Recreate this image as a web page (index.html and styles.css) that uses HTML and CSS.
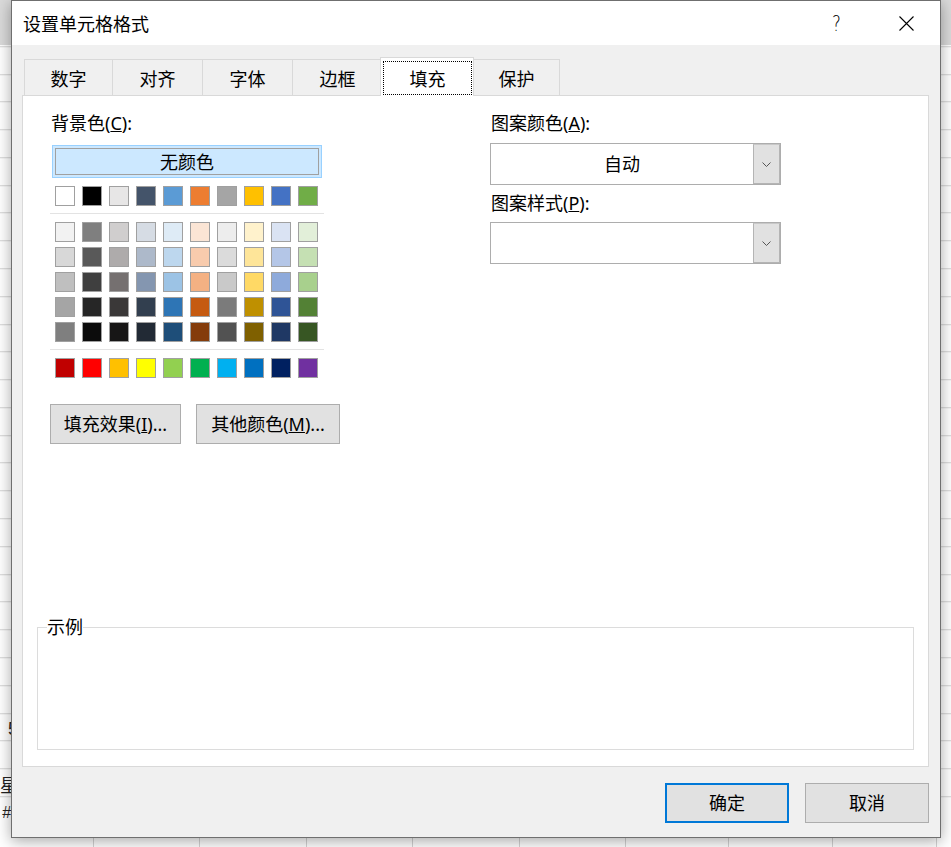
FILE: index.html
```html
<!DOCTYPE html>
<html lang="zh-CN">
<head>
<meta charset="utf-8">
<title>设置单元格格式</title>
<link rel="stylesheet" href="styles.css">
</head>
<body>
<div class="sheet">
  <div class="band"></div>
  <div class="rows">
    <div class="col c1">
      <div class="frag f5">5</div>
      <div class="frag fx">星</div>
      <div class="frag fh">#</div>
    </div>
    <div class="col c2"></div>
    <div class="col c3"></div>
    <div class="col c4"></div>
    <div class="col c5"></div>
    <div class="col c6"></div>
    <div class="col c7"></div>
    <div class="col c8"></div>
    <div class="col c9"></div>
  </div>
</div>

<div class="dialog">
  <div class="titlebar">
    <span class="title">设置单元格格式</span>
    <span class="help">?</span>
    <span class="close"><svg width="15" height="15" viewBox="0 0 15 15"><path d="M0.5 0.5 L14.5 14.5 M14.5 0.5 L0.5 14.5" stroke="#000" stroke-width="1.1" fill="none"/></svg></span>
  </div>
  <div class="body">
    <div class="tabs">
      <div class="tab first">数字</div>
      <div class="tab">对齐</div>
      <div class="tab">字体</div>
      <div class="tab">边框</div>
      <div class="tab active"><span class="focus">填充</span></div>
      <div class="tab last">保护</div>
    </div>
    <div class="panel">
      <div class="top">
        <div class="leftcol">
          <div class="label">背景色(<u>C</u>):</div>
          <div class="nocolor"><span>无颜色</span></div>
          <div class="grid row1">
            <span class="sw" style="background:#ffffff"></span>
            <span class="sw" style="background:#000000"></span>
            <span class="sw" style="background:#e7e6e6"></span>
            <span class="sw" style="background:#44546a"></span>
            <span class="sw" style="background:#5b9bd5"></span>
            <span class="sw" style="background:#ed7d31"></span>
            <span class="sw" style="background:#a5a5a5"></span>
            <span class="sw" style="background:#ffc000"></span>
            <span class="sw" style="background:#4472c4"></span>
            <span class="sw" style="background:#70ad47"></span>
          </div>
          <div class="sep"></div>
          <div class="grid tints">
            <span class="sw" style="background:#f2f2f2"></span>
            <span class="sw" style="background:#7f7f7f"></span>
            <span class="sw" style="background:#d0cece"></span>
            <span class="sw" style="background:#d6dce4"></span>
            <span class="sw" style="background:#deebf6"></span>
            <span class="sw" style="background:#fbe5d5"></span>
            <span class="sw" style="background:#ededed"></span>
            <span class="sw" style="background:#fff2cc"></span>
            <span class="sw" style="background:#dae3f3"></span>
            <span class="sw" style="background:#e2efd9"></span>

            <span class="sw" style="background:#d8d8d8"></span>
            <span class="sw" style="background:#595959"></span>
            <span class="sw" style="background:#aeabab"></span>
            <span class="sw" style="background:#adb9ca"></span>
            <span class="sw" style="background:#bdd7ee"></span>
            <span class="sw" style="background:#f8cbad"></span>
            <span class="sw" style="background:#dbdbdb"></span>
            <span class="sw" style="background:#fee599"></span>
            <span class="sw" style="background:#b4c6e7"></span>
            <span class="sw" style="background:#c5e0b3"></span>

            <span class="sw" style="background:#bfbfbf"></span>
            <span class="sw" style="background:#3f3f3f"></span>
            <span class="sw" style="background:#757070"></span>
            <span class="sw" style="background:#8496b0"></span>
            <span class="sw" style="background:#9cc3e5"></span>
            <span class="sw" style="background:#f4b183"></span>
            <span class="sw" style="background:#c9c9c9"></span>
            <span class="sw" style="background:#ffd965"></span>
            <span class="sw" style="background:#8eaadb"></span>
            <span class="sw" style="background:#a8d08d"></span>

            <span class="sw" style="background:#a5a5a5"></span>
            <span class="sw" style="background:#262626"></span>
            <span class="sw" style="background:#3a3838"></span>
            <span class="sw" style="background:#323f4f"></span>
            <span class="sw" style="background:#2e75b5"></span>
            <span class="sw" style="background:#c55a11"></span>
            <span class="sw" style="background:#7b7b7b"></span>
            <span class="sw" style="background:#bf9000"></span>
            <span class="sw" style="background:#2f5496"></span>
            <span class="sw" style="background:#538135"></span>

            <span class="sw" style="background:#7f7f7f"></span>
            <span class="sw" style="background:#0c0c0c"></span>
            <span class="sw" style="background:#171616"></span>
            <span class="sw" style="background:#222a35"></span>
            <span class="sw" style="background:#1e4e79"></span>
            <span class="sw" style="background:#843c0b"></span>
            <span class="sw" style="background:#525252"></span>
            <span class="sw" style="background:#7f6000"></span>
            <span class="sw" style="background:#1f3864"></span>
            <span class="sw" style="background:#375623"></span>
          </div>
          <div class="sep"></div>
          <div class="grid std">
            <span class="sw" style="background:#c00000"></span>
            <span class="sw" style="background:#ff0000"></span>
            <span class="sw" style="background:#ffc000"></span>
            <span class="sw" style="background:#ffff00"></span>
            <span class="sw" style="background:#92d050"></span>
            <span class="sw" style="background:#00b050"></span>
            <span class="sw" style="background:#00b0f0"></span>
            <span class="sw" style="background:#0070c0"></span>
            <span class="sw" style="background:#002060"></span>
            <span class="sw" style="background:#7030a0"></span>
          </div>
          <div class="btnrow">
            <button class="btn fx-btn">填充效果(<u>I</u>)...</button>
            <button class="btn more-btn">其他颜色(<u>M</u>)...</button>
          </div>
        </div>
        <div class="rightcol">
          <div class="label">图案颜色(<u>A</u>):</div>
          <div class="select first-select">
            <span class="val">自动</span>
            <span class="drop"><svg width="9" height="5" viewBox="0 0 9 5"><path d="M0.5 0.5 L4.5 4.5 L8.5 0.5" stroke="#555" stroke-width="1" fill="none"/></svg></span>
          </div>
          <div class="label label2">图案样式(<u>P</u>):</div>
          <div class="select second-select">
            <span class="val"></span>
            <span class="drop"><svg width="9" height="5" viewBox="0 0 9 5"><path d="M0.5 0.5 L4.5 4.5 L8.5 0.5" stroke="#555" stroke-width="1" fill="none"/></svg></span>
          </div>
        </div>
      </div>
      <fieldset class="sample">
        <legend>示例</legend>
        <div class="sample-area"></div>
      </fieldset>
    </div>
    <div class="footer">
      <button class="btn action primary">确定</button>
      <button class="btn action">取消</button>
    </div>
  </div>
</div>
</body>
</html>
```

FILE: styles.css
```css
html, body {
  margin: 0;
  padding: 0;
}

body {
  width: 951px;
  height: 847px;
  overflow: hidden;
  position: relative;
  background: #ffffff;
  font-family: "Noto Sans", "Noto Sans CJK SC", sans-serif;
  color: #000;
}

/* ---------- spreadsheet behind the dialog ---------- */
.sheet {
  height: 847px;
  display: flex;
  flex-direction: column;
}

.band {
  height: 45px;
  background: #dadada;
  flex: none;
}

.rows {
  flex: 1;
  display: flex;
  background-image: repeating-linear-gradient(to bottom, transparent 0, transparent 26.78px, #d4d4d4 26.78px, #d4d4d4 27.78px);
  background-position: 0 -25.78px;
}

.col {
  box-sizing: border-box;
  border-right: 1px solid #d4d4d4;
  flex: none;
}
.c1 { width: 94px; }
.c2 { width: 106px; }
.c3 { width: 107px; }
.c4 { width: 106px; }
.c5 { width: 107px; }
.c6 { width: 106px; }
.c7 { width: 103px; }
.c8 { width: 104px; }
.c9 { width: 104px; }

.frag {
  color: #222;
}
.f5 {
  font-family: "Liberation Sans", sans-serif;
  font-size: 18px;
  line-height: 20px;
  margin-top: 674px;
  padding-left: 8px;
}
.fx {
  font-family: "Noto Sans CJK SC", sans-serif;
  font-size: 18px;
  line-height: 20px;
  margin-top: 35px;
  padding-left: 0;
}
.fh {
  font-family: "Liberation Sans", sans-serif;
  font-style: italic;
  font-size: 16px;
  line-height: 18px;
  margin-top: 10px;
  padding-left: 2px;
}

/* ---------- dialog window ---------- */
.dialog {
  position: absolute;
  left: 11px;
  top: 0;
  width: 930px;
  height: 838px;
  box-sizing: border-box;
  border: 1px solid #6f6f6f;
  background: #f0f0f0;
  box-shadow: 0 3px 14px rgba(0, 0, 0, 0.35);
  display: flex;
  flex-direction: column;
}

.titlebar {
  height: 44px;
  flex: none;
  background: #ffffff;
  display: flex;
  align-items: center;
  padding-left: 11px;
  padding-top: 1px;
  box-sizing: border-box;
}

.title {
  font-size: 18px;
  line-height: 24px;
}

.help {
  margin-left: auto;
  font-family: "DejaVu Sans", sans-serif;
  font-size: 21px;
  line-height: 24px;
  font-weight: 300;
  transform: scaleX(0.8);
}

.close {
  display: flex;
  margin-left: 57px;
  margin-right: 26px;
  margin-top: -1px;
}

.body {
  flex: 1;
  display: flex;
  flex-direction: column;
  padding: 12px 11px 14px 10px;
}

/* ---------- tabs ---------- */
.tabs {
  display: flex;
  align-items: flex-end;
  height: 38px;
  padding-left: 2px;
  flex: none;
}

.tab {
  box-sizing: border-box;
  width: 90px;
  height: 36px;
  flex: none;
  border: 1px solid #d9d9d9;
  border-bottom: none;
  border-right: none;
  background: #f0f0f0;
  display: flex;
  align-items: center;
  justify-content: center;
  font-size: 18px;
  line-height: 24px;
  padding-top: 2px;
}

.tab.first { width: 88px; }

.tab.last {
  width: 87px;
  border-right: 1px solid #d9d9d9;
}

.tab.active {
  width: 94px;
  height: 39px;
  margin-left: -2px;
  margin-right: -1px;
  margin-bottom: -1px;
  border-right: 1px solid #d9d9d9;
  background: #ffffff;
  position: relative;
  z-index: 2;
  padding: 3px 1px 1px 2px;
  align-items: stretch;
  justify-content: stretch;
}

.focus {
  flex: 1;
  border: 1px dotted #000;
  display: flex;
  align-items: center;
  justify-content: center;
  padding-top: 2px;
}

/* ---------- panel ---------- */
.panel {
  height: 672px;
  box-sizing: border-box;
  border: 1px solid #d9d9d9;
  background: #ffffff;
  display: flex;
  flex-direction: column;
  flex: none;
}

.top {
  display: flex;
  padding: 15px 0 0 27px;
}

.leftcol {
  width: 274px;
  flex: none;
  display: flex;
  flex-direction: column;
}

.rightcol {
  width: 291px;
  flex: none;
  margin-left: 166px;
  display: flex;
  flex-direction: column;
}

.label {
  font-size: 18px;
  line-height: 24px;
  height: 24px;
  padding-left: 1px;
}

.nocolor {
  margin: 10px 2px 0;
  height: 33px;
  box-sizing: border-box;
  border: 1px solid #99d1ff;
  background: #cce8ff;
  padding: 2px;
  display: flex;
}

.nocolor span {
  flex: 1;
  border: 1px solid #a0a0a0;
  display: flex;
  align-items: center;
  justify-content: center;
  font-size: 18px;
  line-height: 24px;
}

.grid {
  display: grid;
  grid-template-columns: repeat(10, 20px);
  grid-auto-rows: 20px;
  column-gap: 7px;
  row-gap: 5px;
  padding: 0 5px;
}

.row1 { margin-top: 8px; }

.sw {
  box-sizing: border-box;
  border: 1px solid #a0a0a0;
  display: block;
}

.sep {
  height: 1px;
  background: #e3e3e3;
  margin: 7px 0 8px;
}

.btnrow {
  display: flex;
  gap: 15px;
  margin-top: 26px;
  width: 300px;
}

.btn {
  box-sizing: border-box;
  height: 40px;
  flex: none;
  border: 1px solid #adadad;
  background: #e1e1e1;
  font-family: "Noto Sans", "Noto Sans CJK SC", sans-serif;
  font-size: 18px;
  line-height: 24px;
  color: #000;
  padding: 0;
  display: flex;
  align-items: center;
  justify-content: center;
}

.fx-btn { width: 131px; }
.more-btn { width: 144px; }

.select {
  height: 42px;
  box-sizing: border-box;
  border: 1px solid #adadad;
  background: #fff;
  display: flex;
}

.first-select { margin-top: 8px; }
.label2 { margin-top: 6px; }
.second-select { margin-top: 7px; }

.val {
  flex: 1;
  display: flex;
  align-items: center;
  justify-content: center;
  font-size: 18px;
  line-height: 24px;
}

.drop {
  width: 27px;
  box-sizing: border-box;
  background: #e1e1e1;
  border: 1px solid #b4b4b4;
  border-top-color: #c8c8c8;
  display: flex;
  align-items: center;
  justify-content: center;
}

/* ---------- sample group ---------- */
.sample {
  margin: auto 14px 16px 14px;
  padding: 0 0 0 9px;
  border: 1px solid #dcdcdc;
  min-width: 0;
}

.sample legend {
  padding: 0;
  font-size: 18px;
  line-height: 24px;
}

.sample-area {
  height: 110px;
}

/* ---------- footer ---------- */
.footer {
  display: flex;
  justify-content: flex-end;
  gap: 16px;
  margin-top: 16px;
}

.action {
  width: 124px;
}

.primary {
  border: 2px solid #0078d7;
}
```
